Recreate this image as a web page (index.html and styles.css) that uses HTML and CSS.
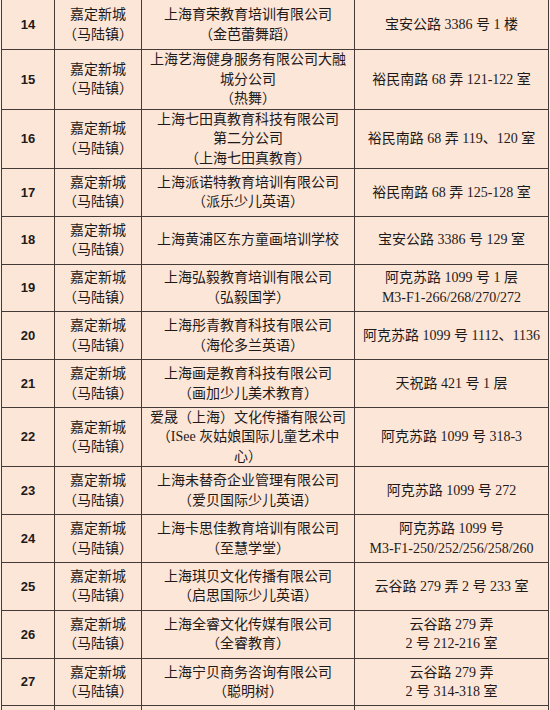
FILE: index.html
```html
<!DOCTYPE html>
<html lang="zh-CN">
<head>
<meta charset="utf-8">
<title>嘉定新城 培训机构名单</title>
<link rel="stylesheet" href="styles.css">
</head>
<body>
<div class="sheet">
<table class="list">
  <colgroup>
    <col class="c-no"><col class="c-area"><col class="c-name"><col class="c-addr">
  </colgroup>
  <tbody>
    <tr class="first"><td class="no">14</td><td>嘉定新城<br>（马陆镇）</td><td>上海育荣教育培训有限公司<br>（金芭蕾舞蹈）</td><td>宝安公路 3386 号 1 楼</td></tr>
    <tr class="tall"><td class="no">15</td><td>嘉定新城<br>（马陆镇）</td><td>上海艺海健身服务有限公司大融<br>城分公司<br>（热舞）</td><td>裕民南路 68 弄 121-122 室</td></tr>
    <tr class="tall"><td class="no">16</td><td>嘉定新城<br>（马陆镇）</td><td>上海七田真教育科技有限公司<br>第二分公司<br>（上海七田真教育）</td><td>裕民南路 68 弄 119、120 室</td></tr>
    <tr><td class="no">17</td><td>嘉定新城<br>（马陆镇）</td><td>上海派诺特教育培训有限公司<br>（派乐少儿英语）</td><td>裕民南路 68 弄 125-128 室</td></tr>
    <tr><td class="no">18</td><td>嘉定新城<br>（马陆镇）</td><td>上海黄浦区东方童画培训学校</td><td>宝安公路 3386 号 129 室</td></tr>
    <tr><td class="no">19</td><td>嘉定新城<br>（马陆镇）</td><td>上海弘毅教育培训有限公司<br>（弘毅国学）</td><td>阿克苏路 1099 号 1 层<br>M3-F1-266/268/270/272</td></tr>
    <tr><td class="no">20</td><td>嘉定新城<br>（马陆镇）</td><td>上海彤青教育科技有限公司<br>（海伦多兰英语）</td><td>阿克苏路 1099 号 1112、1136</td></tr>
    <tr><td class="no">21</td><td>嘉定新城<br>（马陆镇）</td><td>上海画是教育科技有限公司<br>（画加少儿美术教育）</td><td>天祝路 421 号 1 层</td></tr>
    <tr class="tall"><td class="no">22</td><td>嘉定新城<br>（马陆镇）</td><td>爱晟（上海）文化传播有限公司<br>（ISee 灰姑娘国际儿童艺术中<br>心）</td><td>阿克苏路 1099 号 318-3</td></tr>
    <tr><td class="no">23</td><td>嘉定新城<br>（马陆镇）</td><td>上海未替奇企业管理有限公司<br>（爱贝国际少儿英语）</td><td>阿克苏路 1099 号 272</td></tr>
    <tr><td class="no">24</td><td>嘉定新城<br>（马陆镇）</td><td>上海卡思佳教育培训有限公司<br>（至慧学堂）</td><td>阿克苏路 1099 号<br>M3-F1-250/252/256/258/260</td></tr>
    <tr><td class="no">25</td><td>嘉定新城<br>（马陆镇）</td><td>上海琪贝文化传播有限公司<br>（启思国际少儿英语）</td><td>云谷路 279 弄 2 号 233 室</td></tr>
    <tr><td class="no">26</td><td>嘉定新城<br>（马陆镇）</td><td>上海全睿文化传媒有限公司<br>（全睿教育）</td><td>云谷路 279 弄<br>2 号 212-216 室</td></tr>
    <tr><td class="no">27</td><td>嘉定新城<br>（马陆镇）</td><td>上海宁贝商务咨询有限公司<br>（聪明树）</td><td>云谷路 279 弄<br>2 号 314-318 室</td></tr>
    <tr><td class="no"></td><td></td><td></td><td></td></tr>
  </tbody>
</table>
</div>
</body>
</html>
```
FILE: styles.css
```css
html, body {
  margin: 0;
  padding: 0;
  background: #fdeee4;
}
body {
  width: 550px;
  height: 710px;
  overflow: hidden;
}
.sheet {
  padding-left: 1px;
  margin-top: -1px;
}
.list {
  border-collapse: collapse;
  table-layout: fixed;
  width: 547px;
  background: #fce6d7;
  font-family: "Liberation Serif", "Noto Sans CJK SC", serif;
  font-size: 14px;
  line-height: 19.5px;
  color: #1f1a1a;
}
.c-no { width: 53px; }
.c-area { width: 87px; }
.c-name { width: 213px; }
.c-addr { width: 194px; }
.list td {
  border: 1px solid #443a38;
  text-align: center;
  vertical-align: middle;
  padding: 0 4px;
  white-space: nowrap;
}
.list tr { height: 47.8px; }
.list tr.first { height: 50px; }
.list tr.tall { height: 59.5px; }
.list td.no {
  font-weight: bold;
  font-family: "Liberation Sans", "Noto Sans CJK SC", sans-serif;
  font-size: 13px;
}
```
